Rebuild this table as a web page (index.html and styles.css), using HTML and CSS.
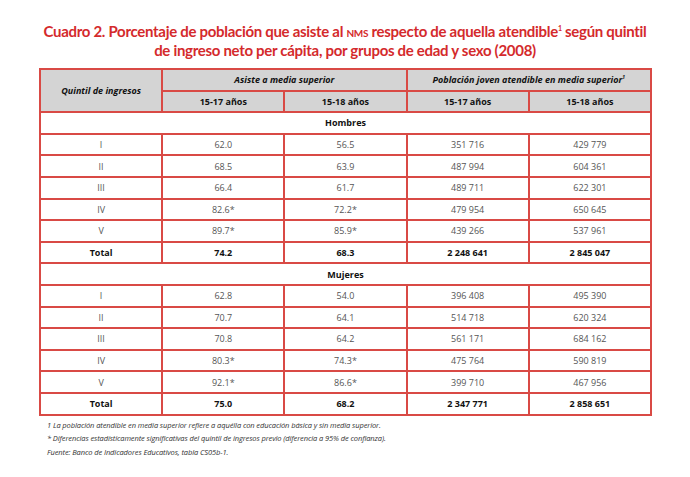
FILE: index.html
```html
<!DOCTYPE html>
<html lang="es">
<head>
<meta charset="utf-8">
<link rel="stylesheet" href="styles.css">
</head>
<body>
<div class="page">
  <h1 class="title">Cuadro 2. Porcentaje de población que asiste al <span class="sc">nms</span> respecto de aquella atendible<sup>1</sup> según quintil<br>de ingreso neto per cápita, por grupos de edad y sexo (2008)</h1>
  <table class="data">
    <colgroup><col><col><col><col><col></colgroup>
    <thead>
      <tr>
        <th rowspan="2" class="it">Quintil de ingresos</th>
        <th colspan="2" class="it">Asiste a media superior</th>
        <th colspan="2" class="it">Población joven atendible en media superior<sup>1</sup></th>
      </tr>
      <tr>
        <th>15-17 años</th><th>15-18 años</th><th>15-17 años</th><th>15-18 años</th>
      </tr>
    </thead>
    <tbody>
      <tr class="group"><td colspan="5">Hombres</td></tr>
      <tr><td>I</td><td>62.0</td><td>56.5</td><td>351 716</td><td>429 779</td></tr>
      <tr><td>II</td><td>68.5</td><td>63.9</td><td>487 994</td><td>604 361</td></tr>
      <tr><td>III</td><td>66.4</td><td>61.7</td><td>489 711</td><td>622 301</td></tr>
      <tr><td>IV</td><td>82.6*</td><td>72.2*</td><td>479 954</td><td>650 645</td></tr>
      <tr><td>V</td><td>89.7*</td><td>85.9*</td><td>439 266</td><td>537 961</td></tr>
      <tr class="total"><td>Total</td><td>74.2</td><td>68.3</td><td>2 248 641</td><td>2 845 047</td></tr>
      <tr class="group"><td colspan="5">Mujeres</td></tr>
      <tr><td>I</td><td>62.8</td><td>54.0</td><td>396 408</td><td>495 390</td></tr>
      <tr><td>II</td><td>70.7</td><td>64.1</td><td>514 718</td><td>620 324</td></tr>
      <tr><td>III</td><td>70.8</td><td>64.2</td><td>561 171</td><td>684 162</td></tr>
      <tr><td>IV</td><td>80.3*</td><td>74.3*</td><td>475 764</td><td>590 819</td></tr>
      <tr><td>V</td><td>92.1*</td><td>86.6*</td><td>399 710</td><td>467 956</td></tr>
      <tr class="total"><td>Total</td><td>75.0</td><td>68.2</td><td>2 347 771</td><td>2 858 651</td></tr>
    </tbody>
  </table>
  <div class="notes">
    <p>1 La población atendible en media superior refiere a aquélla con educación básica y sin media superior.</p>
    <p>* Diferencias estadísticamente significativas del quintil de ingresos previo (diferencia a 95% de confianza).</p>
    <p>Fuente: Banco de Indicadores Educativos, tabla CS05b-1.</p>
  </div>
</div>
</body>
</html>
```

FILE: styles.css
```css
html, body {
  margin: 0;
  padding: 0;
  background: #ffffff;
}
.page {
  width: 690px;
  height: 477px;
  padding-top: 22px;
  box-sizing: border-box;
  font-family: "Open Sans", "Liberation Sans", sans-serif;
}
.title {
  margin: 0 0 9px 0;
  text-align: center;
  color: #d42a2c;
  font-family: "Lato", "Open Sans", sans-serif;
  font-weight: 700;
  font-size: 15px;
  letter-spacing: -0.3px;
  line-height: 18px;
}
.title .sc {
  font-variant: small-caps;
  font-size: 14.5px;
}
.title sup {
  font-size: 7px;
  vertical-align: 6px;
  line-height: 0;
}
.data {
  margin-left: 39px;
  width: 613px;
  border-collapse: collapse;
  table-layout: fixed;
  border: 2px solid #d94a45;
  font-size: 9px;
  color: #555;
}
.data th, .data td {
  border: 2px solid #d94a45;
  height: 19.6px;
  padding: 0;
  text-align: center;
  vertical-align: middle;
}
.data th {
  background: #d4d4d4;
  color: #111;
  font-weight: 700;
  font-size: 9px;
}
.data th.it {
  font-style: italic;
}
.data th sup {
  font-size: 5px;
  vertical-align: 4px;
  line-height: 0;
}
.data tr.group td {
  font-weight: 700;
  color: #111;
}
.data tr.total td {
  font-weight: 700;
  color: #111;
}
.notes {
  margin: 3px 0 0 47px;
  font-style: italic;
  font-size: 7.5px;
  letter-spacing: -0.1px;
  color: #333;
}
.notes p {
  margin: 0;
  line-height: 13.5px;
}
```
